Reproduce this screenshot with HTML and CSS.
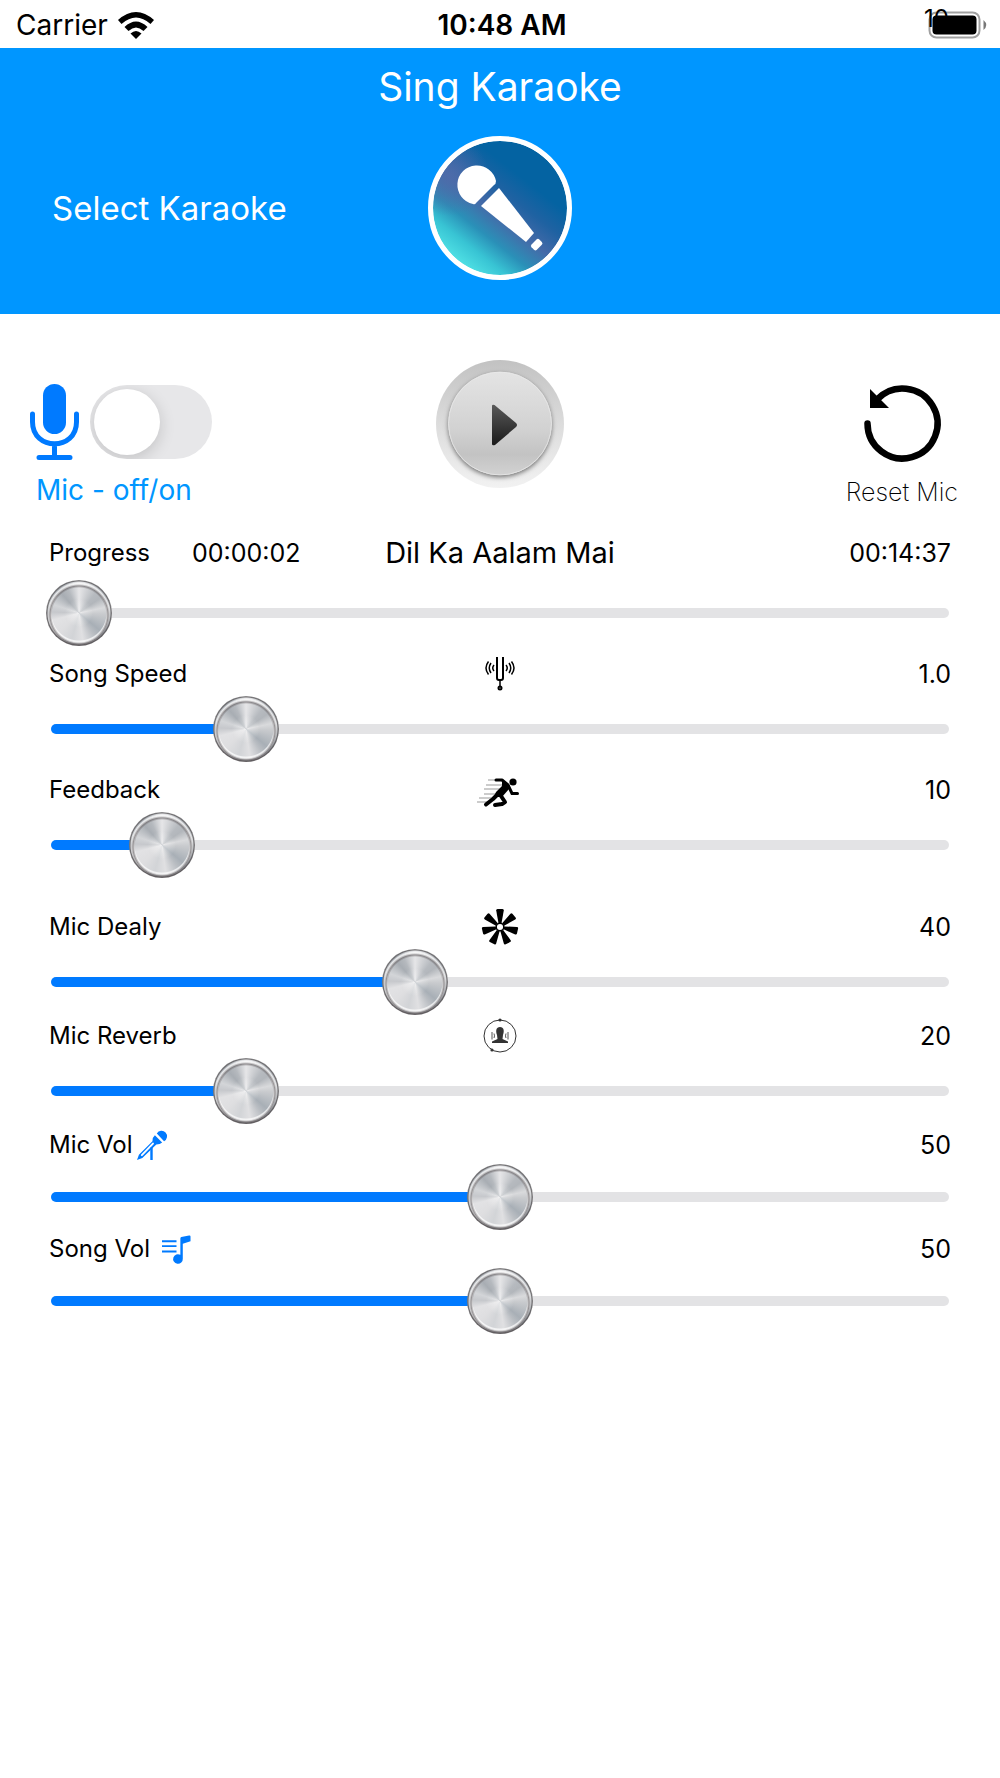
FILE: index.html
```html
<!DOCTYPE html>
<html lang="en">
<head>
  <meta charset="UTF-8">
  <meta name="viewport" content="width=device-width, initial-scale=1.0">
  <title>Sing Karaoke</title>
  <link rel="stylesheet" href="styles.css">
</head>
<body>

<div class="status-bar">
  <div class="carrier">
    <span>Carrier</span>
    <svg class="wifi-icon" viewBox="0 0 36 27">
      <path d="M0 8 Q18 -8 36 8 L32.500 12 Q18 -1 3.500 12 Z"/>
      <path d="M6.500 15 Q18 4 29.500 15 L25.500 19 Q18 12 10.500 19 Z"/>
      <path d="M12.500 21.500 Q18 16.500 23.500 21.500 L18 27 Z"/>
    </svg>
  </div>
  <div class="clock">10:48 AM</div>
  <div class="battery">
    <span class="battery-level">10</span>
    <svg class="battery-icon" viewBox="0 0 60 28">
      <rect x="1.500" y="1.500" width="50" height="25" rx="7" fill="none" stroke="#a0a0a0" stroke-width="2"/>
      <rect x="4.500" y="4.500" width="44" height="19" rx="4"/>
      <path d="M55.500 9 Q61 14 55.500 19 Z" fill="#777"/>
    </svg>
  </div>
</div>

<header class="header">
  <h1 class="title">Sing Karaoke</h1>
  <div class="header-row">
    <button class="select-button" type="button">Select Karaoke</button>
    <button class="karaoke-button" type="button" aria-label="Karaoke">
      <svg viewBox="0 0 144 144">
        <path fill="#fff" d="M45 68 A19.500 19.500 0 1 1 68 45 Q68 48 66 49 L48 67 Q47 69 45 68 Z"/>
        <path fill="#fff" d="M71 52 L106 97 L98 106 L53 70 Z"/>
        <rect x="103" y="105" width="11" height="7.500" rx="2" fill="#fff" transform="rotate(-45 108.500 108.500)"/>
      </svg>
    </button>
  </div>
</header>

<main>
  <div class="transport">
    <div class="mic">
      <div class="mic-switch">
        <svg class="mic-icon" viewBox="0 0 49 76">
          <rect x="13" y="0" width="23" height="50" rx="11.500" fill="#007aff"/>
          <path d="M2.500 30 V38 C2.500 67 46.500 67 46.500 38 V30 M24.500 61 V73 M9 73.500 H40" fill="none" stroke="#007aff" stroke-width="5" stroke-linecap="round"/>
        </svg>
        <input class="toggle" id="mic-toggle" type="checkbox">
      </div>
      <label class="mic-label" for="mic-toggle">Mic - off/on</label>
    </div>

    <button class="play-button" type="button" aria-label="Play">
      <svg viewBox="0 0 130 130">
        <defs>
          <linearGradient id="play-rim" x1="0" y1="0" x2="0" y2="1">
            <stop offset="0" stop-color="#c2c2c2"/>
            <stop offset=".5" stop-color="#dcdcdc"/>
            <stop offset="1" stop-color="#f2f2f2"/>
          </linearGradient>
          <linearGradient id="play-face" x1="0" y1="0" x2="0" y2="1">
            <stop offset="0" stop-color="#e4e4e4"/>
            <stop offset=".55" stop-color="#d2d2d2"/>
            <stop offset=".8" stop-color="#c3c3c3"/>
            <stop offset="1" stop-color="#d2d2d2"/>
          </linearGradient>
          <linearGradient id="play-arrow" x1="0" y1="0" x2="0" y2="1">
            <stop offset="0" stop-color="#595959"/>
            <stop offset="1" stop-color="#1a1a1a"/>
          </linearGradient>
          <filter id="play-shadow" x="-20%" y="-20%" width="140%" height="140%">
            <feDropShadow dx="0" dy="2" stdDeviation="2.500" flood-color="#000" flood-opacity=".55"/>
          </filter>
        </defs>
        <circle cx="65" cy="65" r="64" fill="url(#play-rim)"/>
        <circle cx="65" cy="64.500" r="51.500" fill="url(#play-face)" filter="url(#play-shadow)"/>
        <circle cx="65" cy="64.500" r="51.500" fill="none" stroke="#eee" stroke-opacity=".7"/>
        <path d="M57 47 Q57 45 59.500 46 L81 64 Q83 66 81 68 L60 86 Q57 87 57 85 Z" fill="url(#play-arrow)"/>
      </svg>
    </button>

    <button class="reset-button" type="button">
      <svg class="reset-icon" viewBox="0 0 76 77">
        <path d="M3.500 38.500 A35 35 0 1 0 13 14.500" fill="none" stroke="#000" stroke-width="6.500" stroke-linecap="round"/>
        <path d="M6 4 L25 23 H6 Z"/>
      </svg>
      <span>Reset Mic</span>
    </button>
  </div>

  <section class="group">
    <div class="control">
      <div class="control-head now-playing">
        <div class="control-name">
          <label for="progress">Progress</label>
          <span class="elapsed">00:00:02</span>
        </div>
        <span class="song-title">Dil Ka Aalam Mai</span>
        <span class="value">00:14:37</span>
      </div>
      <div class="slider" style="--value: 0%">
        <input id="progress" type="range" min="0" max="877" value="2">
      </div>
    </div>

    <div class="control">
      <div class="control-head">
        <div class="control-name"><label for="speed">Song Speed</label></div>
        <svg class="control-icon" viewBox="0 0 36 36" fill="none" stroke="#000" stroke-width="1.500">
          <path d="M15 1 V22 Q15 24 17 24 H19 Q21 24 21 22 V1" stroke-width="2"/>
          <path d="M18 24 V31"/>
          <circle cx="18" cy="32" r="1.500" stroke-width="2"/>
          <path d="M12 9 Q9.500 12 12 15 M9 7 Q5.500 12 9 17 M6.500 5.500 Q1.500 12 6.500 18.500 M24 9 Q26.500 12 24 15 M27 7 Q30.500 12 27 17 M29.500 5.500 Q34.500 12 29.500 18.500"/>
        </svg>
        <span class="value">1.0</span>
      </div>
      <div class="slider" style="--value: 20%">
        <input id="speed" type="range" value="20">
      </div>
    </div>

    <div class="control">
      <div class="control-head">
        <div class="control-name"><label for="feedback">Feedback</label></div>
        <svg class="control-icon" viewBox="0 0 36 36">
          <path d="M6 8 H16 M4 13 H20 M2 17 H18 M2 22 H16 M-3 26 H13 M-5 30 H9" stroke="#999" stroke-width="1"/>
          <circle cx="31" cy="10" r="3.600"/>
          <path d="M14 8 H20 L26 13 L30 21.500 H35.500" fill="none" stroke="#000" stroke-width="3" stroke-linecap="round" stroke-linejoin="round"/>
          <path d="M20 7 L28 14 L27 17 L20 25 L12 25 L14 20 L20 14 Z"/>
          <path d="M16 22 L11 27 L4 32.500 M19 24 L23 30 L20 32 L13 33" fill="none" stroke="#000" stroke-width="4" stroke-linecap="round" stroke-linejoin="round"/>
        </svg>
        <span class="value">10</span>
      </div>
      <div class="slider" style="--value: 10%">
        <input id="feedback" type="range" value="10">
      </div>
    </div>
  </section>

  <section class="group group-mic">
    <div class="control">
      <div class="control-head">
        <div class="control-name"><label for="delay">Mic Dealy</label></div>
        <svg class="control-icon" viewBox="-18 -18 36 36">
          <defs><path id="blade" d="M-1.500 -4 L-3.800 -16.500 Q-4 -18 -2.500 -18 H2.500 Q4 -18 3.800 -16.500 L1.500 -4 Z"/></defs>
          <use href="#blade"/>
          <use href="#blade" transform="rotate(51)"/>
          <use href="#blade" transform="rotate(103)"/>
          <use href="#blade" transform="rotate(154)"/>
          <use href="#blade" transform="rotate(206)"/>
          <use href="#blade" transform="rotate(257)"/>
          <use href="#blade" transform="rotate(309)"/>
          <circle r="3.800" fill="#fff" stroke="#000" stroke-width="1.500"/>
        </svg>
        <span class="value">40</span>
      </div>
      <div class="slider" style="--value: 40%">
        <input id="delay" type="range" value="40">
      </div>
    </div>

    <div class="control">
      <div class="control-head">
        <div class="control-name"><label for="reverb">Mic Reverb</label></div>
        <svg class="control-icon" viewBox="0 0 36 36" fill="#333">
          <circle cx="18" cy="18" r="16" fill="none" stroke="#333"/>
          <circle cx="18" cy="2" r="1.600"/>
          <circle cx="10" cy="32" r="1.600"/>
          <path d="M18 9 C22 9 22.500 13 21 17 L20.500 21 L26 23.500 V25 H10 V23.500 L15.500 21 L15 17 C13.500 13 14 9 18 9 Z"/>
          <path d="M12 15.500 Q13 18 12 20 M10 14 V21.500 M24 15.500 Q23 18 24 20 M26 14 V21.500" fill="none" stroke="#555"/>
        </svg>
        <span class="value">20</span>
      </div>
      <div class="slider" style="--value: 20%">
        <input id="reverb" type="range" value="20">
      </div>
    </div>
  </section>

  <section class="group group-volume">
    <div class="control">
      <div class="control-head">
        <div class="control-name">
          <label for="mic-vol">Mic Vol</label>
          <svg class="volume-icon" viewBox="0 0 30 30" fill="#007aff">
            <path d="M20.500 2.500 A5.700 5.700 0 1 1 28 10.500 Z"/>
            <path d="M18.500 4.500 L26 12 Q24 14 20 14 L5.500 28 L0 30 L2 24.500 L16 10.500 Q16 6.500 18.500 4.500 Z"/>
            <path d="M16.500 13 L5 25" stroke="#fff" stroke-width="2" stroke-linecap="round"/>
            <path d="M15 17 V30" stroke="#007aff" stroke-width="2.500"/>
          </svg>
        </div>
        <span class="value">50</span>
      </div>
      <div class="slider" style="--value: 50%">
        <input id="mic-vol" type="range" value="50">
      </div>
    </div>

    <div class="control">
      <div class="control-head">
        <div class="control-name">
          <label for="song-vol">Song Vol</label>
          <svg class="volume-icon song-icon" viewBox="0 0 30 30" fill="#007aff">
            <path d="M0 6.500 H15 M0 11.500 H15 M0 17 H15" stroke="#007aff" stroke-width="2"/>
            <path d="M19 3.500 Q19 2.500 20 2 L28 0.500 Q29.500 0.200 29.500 1.500 V6.500 L21.500 9 V24.500 A5 5 0 1 1 19 20.500 Z"/>
          </svg>
        </div>
        <span class="value">50</span>
      </div>
      <div class="slider" style="--value: 50%">
        <input id="song-vol" type="range" value="50">
      </div>
    </div>
  </section>
</main>

<script>
  // keep the blue part of each track in step with its knob
  document.querySelectorAll('.slider input').forEach(function(input) {
    input.addEventListener('input', function() {
      input.parentNode.style.setProperty('--value', input.value / (input.max || 100) * 100 + '%');
    });
  });
</script>

</body>
</html>
```
FILE: styles.css
```css
:root {
  --header-blue: #0096ff;
  --tint: #007aff;
  --track: #e3e3e5;
}

* {
  margin: 0;
  padding: 0;
  box-sizing: border-box;
}

body {
  font-family: Inter, "Liberation Sans", sans-serif;
  font-size: 24px;
  line-height: 36px;
  background: #fff;
  color: #000;
}

button {
  font: inherit;
  color: inherit;
  background: none;
  border: none;
  cursor: pointer;
}

svg {
  display: block;
  flex-shrink: 0;
  overflow: visible;
}

/* status bar */
.status-bar {
  display: grid;
  grid-template-columns: 1fr auto 1fr;
  align-items: center;
  height: 48px;
  padding: 2px 12px 0 16px;
  font-size: 28px;
}

.carrier {
  display: flex;
  align-items: center;
  gap: 10px;
}

.wifi-icon {
  width: 36px;
  height: 27px;
}

.clock {
  font-weight: 600;
}

.battery {
  position: relative;
  justify-self: end;
}

.battery-icon {
  width: 60px;
  height: 28px;
}

.battery-level {
  position: absolute;
  top: -6px;
  left: -4px;
  font-size: 24px;
  line-height: 28px;
}

/* header */
.header {
  padding: 15px 0 34px;
  background: var(--header-blue);
  color: #fff;
}

.title {
  margin-bottom: 25px;
  font-size: 39px;
  font-weight: 400;
  line-height: 48px;
  text-align: center;
}

.header-row {
  display: grid;
  grid-template-columns: 1fr auto 1fr;
  align-items: center;
}

.select-button {
  justify-self: start;
  padding-left: 52px;
  font-size: 33px;
}

.karaoke-button {
  width: 144px;
  height: 144px;
  border-radius: 50%;
  background:
    radial-gradient(circle at 12% 26%, rgba(78, 108, 170, 0.9) 0, transparent 26%) padding-box,
    linear-gradient(38deg, #4fe0e4 14%, #38c4d4 24%, #2a90b8 34%, #456aa8 46%, #1f62a2 58%, #0463a2 70%) padding-box,
    #fff;
  border: 5px solid #fff;
}

.karaoke-button svg {
  margin: -5px;
}

/* mic switch, play and reset */
.transport {
  display: grid;
  grid-template-columns: 1fr auto 1fr;
  align-items: end;
  padding: 45px 30px 20px;
}

.mic {
  padding-top: 25px;
}

.mic-switch {
  display: flex;
  align-items: center;
  gap: 11px;
  margin-bottom: 12px;
}

.mic-icon {
  width: 49px;
  height: 76px;
}

.toggle {
  appearance: none;
  width: 122px;
  height: 74px;
  padding: 4px;
  border-radius: 37px;
  background: #e7e7e9;
  overflow: hidden;
  cursor: pointer;
}

.toggle::before {
  content: "";
  display: block;
  width: 66px;
  height: 66px;
  border-radius: 50%;
  background: #fff;
  box-shadow: 0 4px 16px rgba(0, 0, 0, 0.16);
}

.toggle:checked {
  background: #34c759;
}

.toggle:checked::before {
  margin-left: auto;
}

.mic-label {
  padding-left: 6px;
  font-size: 28px;
  color: var(--header-blue);
}

.play-button {
  align-self: start;
  width: 130px;
  height: 130px;
  border-radius: 50%;
}

.reset-button {
  display: flex;
  flex-direction: column;
  align-items: center;
  gap: 12px;
  justify-self: end;
  padding-right: 12px;
  font-size: 25px;
  font-weight: 200;
}

.reset-icon {
  width: 76px;
  height: 77px;
}

/* sliders */
.group {
  display: flex;
  flex-direction: column;
  gap: 10px;
}

.group-mic {
  gap: 3px;
  margin-top: 31px;
  margin-bottom: 3px;
}

.group-volume {
  gap: 1px;
}

.control {
  display: flex;
  flex-direction: column;
  gap: 4px;
}

.group-volume .control {
  gap: 1px;
}

.control-head {
  display: grid;
  grid-template-columns: 1fr auto 1fr;
  align-items: center;
  height: 36px;
  padding: 0 49px;
}

.now-playing {
  height: 46px;
}

.control-name {
  display: flex;
  align-items: center;
}

.elapsed {
  margin-left: 42px;
  font-size: 25px;
}

.song-title {
  font-size: 29px;
}

.value {
  grid-column: 3;
  justify-self: end;
  font-size: 25px;
}

.control-icon {
  width: 36px;
  height: 36px;
}

.volume-icon {
  width: 29px;
  height: 29px;
  margin-left: 4px;
}

.song-icon {
  margin-left: 12px;
}

.slider {
  display: grid;
  align-items: center;
  padding: 0 44px;
}

.slider::before,
.slider input {
  grid-area: 1 / 1;
}

.slider::before {
  content: "";
  height: 10px;
  margin: 0 7px;
  border-radius: 5px;
  background: linear-gradient(to right, var(--tint) var(--value), var(--track) var(--value));
}

.slider input {
  appearance: none;
  width: 100%;
  height: 66px;
  background: transparent;
  cursor: pointer;
}

/* brushed metal knob: outer edge, chrome rim, then the spun face */
.slider input::-webkit-slider-thumb {
  appearance: none;
  width: 66px;
  height: 66px;
  border-radius: 50%;
  background:
    radial-gradient(circle, rgba(255, 255, 255, 0.5) 0, transparent 14px),
    radial-gradient(circle at 33px 35px, transparent 27px, rgba(90, 85, 88, 0.6) 29px, transparent 31px),
    radial-gradient(circle at 33px 31px, transparent 32px, rgba(80, 75, 78, 0.5) 34px),
    radial-gradient(circle, transparent 31px, rgba(90, 88, 90, 0.8) 32px, rgba(120, 118, 120, 0.7) 33px),
    radial-gradient(circle, transparent 27px, rgba(255, 255, 255, 0.7) 28px, rgba(255, 255, 255, 0.7) 30px, transparent 31px),
    conic-gradient(#e6e6e8 0deg, #b6babf 40deg, #b2b6bb 55deg, #d9dadc 78deg, #c9cbce 92deg, #a8afb6 130deg, #b9bdc2 145deg, #e0e0e2 172deg, #d2d4d7 195deg, #dedee0 225deg, #e2e2e4 255deg, #c6c8cc 272deg, #d3d5d8 288deg, #a8adb3 318deg, #b5b9be 335deg, #e6e6e8 360deg);
}
```
